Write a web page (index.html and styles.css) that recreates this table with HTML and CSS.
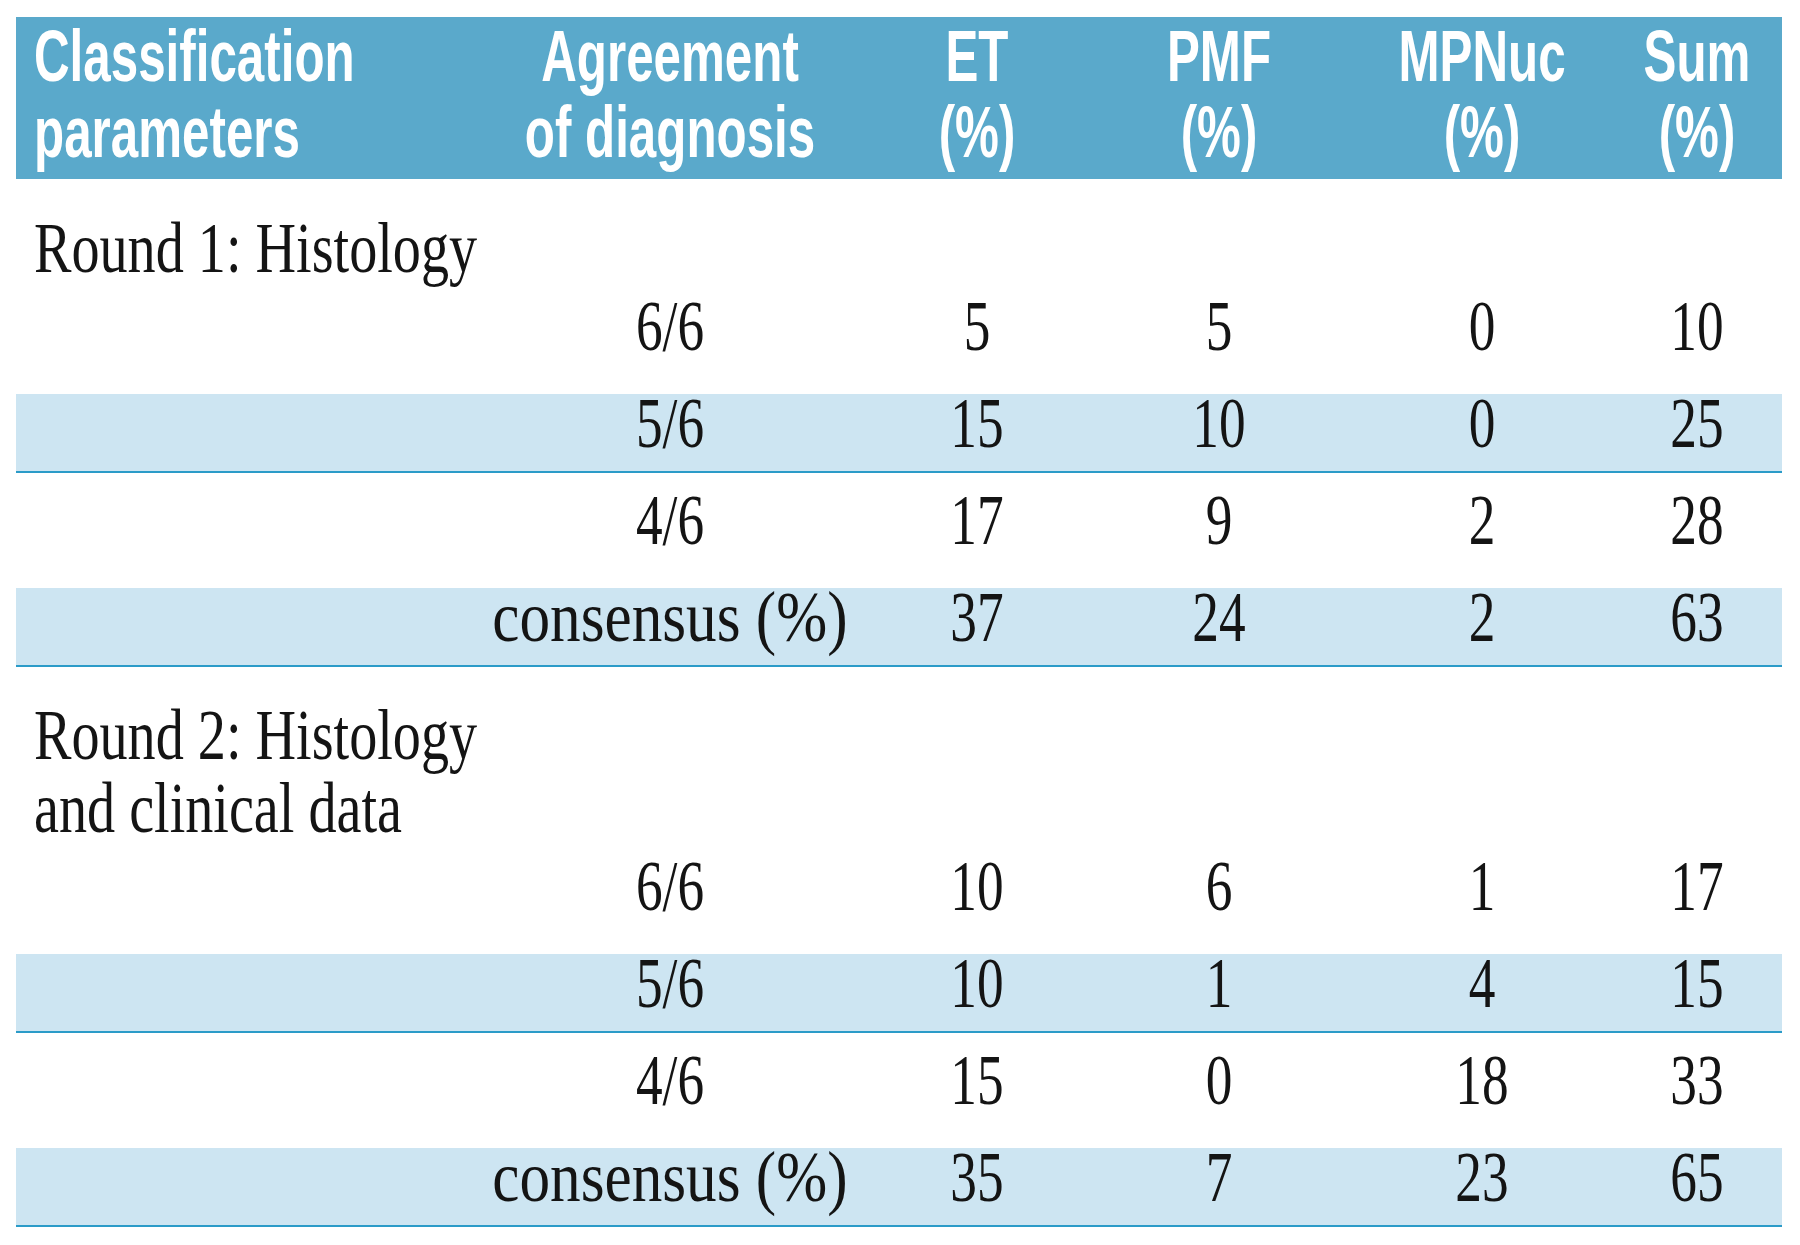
FILE: index.html
```html
<!DOCTYPE html>
<html lang="en">
<head>
<meta charset="utf-8">
<title>Classification agreement table</title>
<link rel="stylesheet" href="styles.css">
</head>
<body>
<div class="page">
  <div class="table">
    <div class="head">
      <div class="hc hc-first"><span class="ht">Classification<br>parameters</span></div>
      <div class="hc"><span class="ht">Agreement<br>of diagnosis</span></div>
      <div class="hc"><span class="ht">ET<br>(%)</span></div>
      <div class="hc"><span class="ht">PMF<br>(%)</span></div>
      <div class="hc"><span class="ht">MPNuc<br>(%)</span></div>
      <div class="hc"><span class="ht">Sum<br>(%)</span></div>
    </div>

    <div class="group group-first">
      <div class="gtitle"><span class="tt">Round 1: Histology</span></div>
      <div class="row">
        <div class="c c1"></div>
        <div class="c"><span class="n">6/6</span></div>
        <div class="c"><span class="n">5</span></div>
        <div class="c"><span class="n">5</span></div>
        <div class="c"><span class="n">0</span></div>
        <div class="c"><span class="n">10</span></div>
      </div>
      <div class="row shade">
        <div class="c c1"></div>
        <div class="c"><span class="n">5/6</span></div>
        <div class="c"><span class="n">15</span></div>
        <div class="c"><span class="n">10</span></div>
        <div class="c"><span class="n">0</span></div>
        <div class="c"><span class="n">25</span></div>
      </div>
      <div class="row">
        <div class="c c1"></div>
        <div class="c"><span class="n">4/6</span></div>
        <div class="c"><span class="n">17</span></div>
        <div class="c"><span class="n">9</span></div>
        <div class="c"><span class="n">2</span></div>
        <div class="c"><span class="n">28</span></div>
      </div>
      <div class="row shade">
        <div class="c c1"></div>
        <div class="c"><span class="w">consensus (%)</span></div>
        <div class="c"><span class="n">37</span></div>
        <div class="c"><span class="n">24</span></div>
        <div class="c"><span class="n">2</span></div>
        <div class="c"><span class="n">63</span></div>
      </div>
    </div>

    <div class="group">
      <div class="gtitle"><span class="tt">Round 2: Histology<br>and clinical data</span></div>
      <div class="row">
        <div class="c c1"></div>
        <div class="c"><span class="n">6/6</span></div>
        <div class="c"><span class="n">10</span></div>
        <div class="c"><span class="n">6</span></div>
        <div class="c"><span class="n">1</span></div>
        <div class="c"><span class="n">17</span></div>
      </div>
      <div class="row shade">
        <div class="c c1"></div>
        <div class="c"><span class="n">5/6</span></div>
        <div class="c"><span class="n">10</span></div>
        <div class="c"><span class="n">1</span></div>
        <div class="c"><span class="n">4</span></div>
        <div class="c"><span class="n">15</span></div>
      </div>
      <div class="row">
        <div class="c c1"></div>
        <div class="c"><span class="n">4/6</span></div>
        <div class="c"><span class="n">15</span></div>
        <div class="c"><span class="n">0</span></div>
        <div class="c"><span class="n">18</span></div>
        <div class="c"><span class="n">33</span></div>
      </div>
      <div class="row shade">
        <div class="c c1"></div>
        <div class="c"><span class="w">consensus (%)</span></div>
        <div class="c"><span class="n">35</span></div>
        <div class="c"><span class="n">7</span></div>
        <div class="c"><span class="n">23</span></div>
        <div class="c"><span class="n">65</span></div>
      </div>
    </div>
  </div>
</div>
</body>
</html>
```

FILE: styles.css
```css
html, body {
  margin: 0;
  padding: 0;
  background: #ffffff;
}

.page {
  padding: 17px 18px 0 16px;
}

.table {
  width: 1766px;
}

.head,
.row {
  display: grid;
  grid-template-columns: 456px 396px 218px 266px 260px 170px;
}

/* Header */
.head {
  background: #5aa9cb;
  color: #ffffff;
  font-family: "Liberation Sans", Arial, sans-serif;
  font-weight: bold;
  font-size: 72px;
  line-height: 76px;
  padding: 1px 0 9px 0;
}

.hc {
  display: flex;
  justify-content: center;
  text-align: center;
  white-space: nowrap;
  min-width: 0;
}

.hc-first {
  justify-content: flex-start;
  text-align: left;
  padding-left: 18px;
}

.ht {
  display: block;
  flex: none;
  transform: scaleX(0.685);
  transform-origin: center top;
}

.hc-first .ht {
  transform-origin: left top;
}

/* Body */
.group {
  font-family: "Liberation Serif", "Times New Roman", serif;
  font-size: 72px;
  color: #141414;
  padding-top: 32px;
}

.group-first {
  padding-top: 33px;
}

.gtitle {
  line-height: 73px;
  padding-left: 18px;
  margin-bottom: 12px;
  white-space: nowrap;
}

.tt {
  display: block;
  transform: scaleX(0.78);
  transform-origin: left top;
}

.row {
  box-sizing: border-box;
  height: 79px;
  line-height: 59px;
  padding-bottom: 18px;
  border-bottom: 2px solid transparent;
}

.row + .row {
  margin-top: 18px;
}

.row.shade {
  background: #cde5f2;
  border-bottom-color: #2b9bc8;
}

.c {
  display: flex;
  justify-content: center;
  white-space: nowrap;
  min-width: 0;
}

.n,
.w {
  display: block;
  flex: none;
  transform-origin: center;
}

.n {
  transform: scaleX(0.74);
}

.w {
  transform: scaleX(0.85);
}
```
